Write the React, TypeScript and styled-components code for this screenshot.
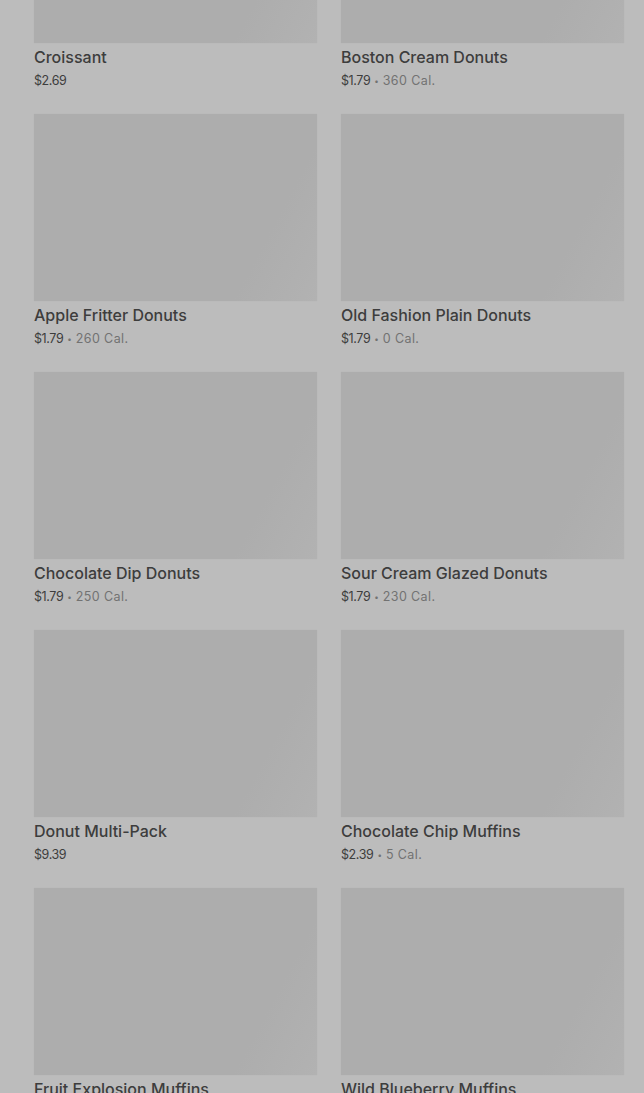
import styled, { createGlobalStyle } from 'styled-components';

const GlobalStyle = createGlobalStyle`
  html, body {
    margin: 0;
    padding: 0;
    background: #bcbcbc;
    font-family: Inter, Roboto, "Liberation Sans", sans-serif;
    overflow: hidden;
  }
`;

type Item = {
    name: string;
    price: string;
    cal?: string;
};

// los productos de la grilla
const items: Item[] = [
    { name: "Croissant", price: "$2.69" },
    { name: "Boston Cream Donuts", price: "$1.79", cal: "360 Cal." },
    { name: "Apple Fritter Donuts", price: "$1.79", cal: "260 Cal." },
    { name: "Old Fashion Plain Donuts", price: "$1.79", cal: "0 Cal." },
    { name: "Chocolate Dip Donuts", price: "$1.79", cal: "250 Cal." },
    { name: "Sour Cream Glazed Donuts", price: "$1.79", cal: "230 Cal." },
    { name: "Donut Multi-Pack", price: "$9.39" },
    { name: "Chocolate Chip Muffins", price: "$2.39", cal: "5 Cal." },
    { name: "Fruit Explosion Muffins", price: "$2.39" },
    { name: "Wild Blueberry Muffins", price: "$2.39" },
];

export default function App() {
    return (
        <>
            <GlobalStyle />
            <Page>
                <Grid>
                    {items.map((item, index) => (
                        <Card key={index}>
                            <Thumb />
                            <Name>{item.name}</Name>
                            <Meta>
                                <Price>{item.price}</Price>
                                {item.cal && (
                                    <>
                                        <Dot>•</Dot>
                                        <Cal>{item.cal}</Cal>
                                    </>
                                )}
                            </Meta>
                        </Card>
                    ))}
                </Grid>
            </Page>
        </>
    );
}

const Page = styled.div`
  width: 644px;
  height: 1093px;
  overflow: hidden;
  background: #bcbcbc;
`;

const Grid = styled.div`
  display: grid;
  grid-template-columns: 283px 283px;
  column-gap: 24px;
  row-gap: 21px;
  padding-left: 34px;
  margin-top: -144px;
`;

const Card = styled.div`
  display: flex;
  flex-direction: column;
  height: 237px;
`;

const Thumb = styled.div`
  height: 187px;
  background: linear-gradient(118deg, #adadad 0%, #adadad 78%, #b2b2b2 100%);
  box-shadow: 0 0 1px rgba(0, 0, 0, 0.05);
`;

const Name = styled.div`
  margin-top: 3px;
  font-size: 16px;
  line-height: 22px;
  font-weight: 500;
  color: #3d3d3d;
`;

const Meta = styled.div`
  display: flex;
  align-items: center;
  margin-top: 4px;
  font-size: 12.5px;
  line-height: 18px;
`;

const Price = styled.span`
  color: #3d3d3d;
  letter-spacing: -0.4px;
`;

const Dot = styled.span`
  color: #727272;
  font-size: 8px;
  margin: 0 4px;
`;

const Cal = styled.span`
  color: #727272;
  letter-spacing: 0.4px;
`;
